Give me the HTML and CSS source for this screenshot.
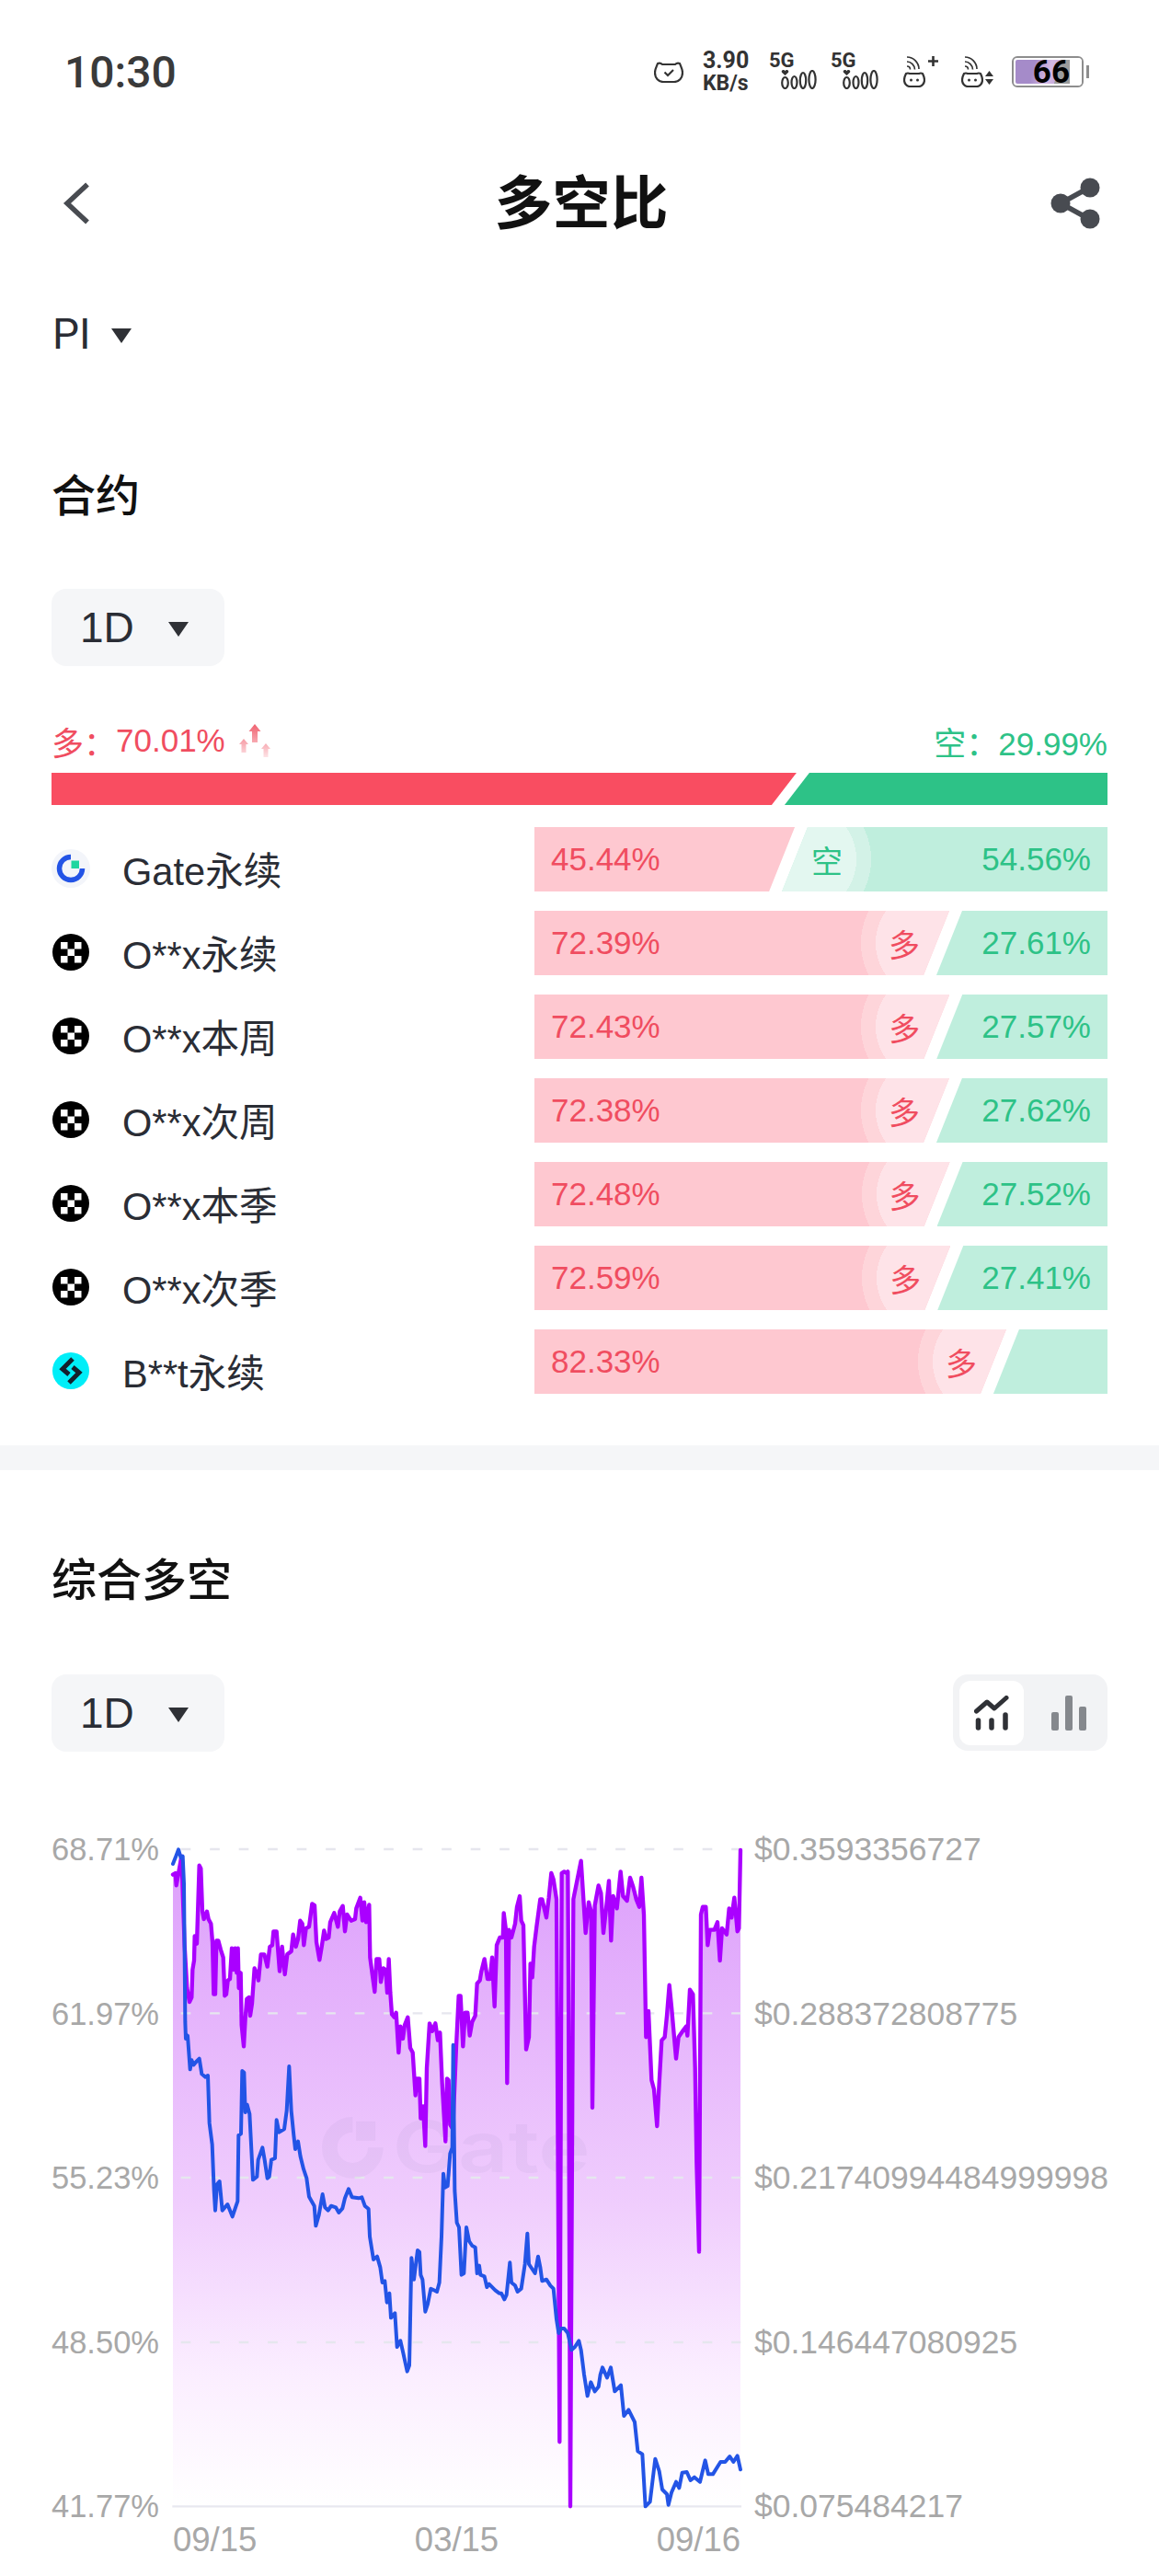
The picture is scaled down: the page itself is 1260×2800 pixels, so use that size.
FILE: index.html
```html
<!DOCTYPE html>
<html lang="zh-CN">
<head>
<meta charset="UTF-8">
<meta name="viewport" content="width=device-width, initial-scale=1.0">
<title>多空比</title>
<link rel="stylesheet" href="styles.css">
</head>
<body>

<svg class="sprite" xmlns="http://www.w3.org/2000/svg">
  <symbol id="okx" viewBox="0 0 42 42">
    <circle cx="21" cy="21" r="20" fill="#000"/>
    <path fill="#fff" d="M10 10h7.500v7.500H10zM25 10h7.500v7.500H25zM17.500 17.500H25V25h-7.500zM10 25h7.500v7.500H10zM25 25h7.500v7.500H25z"/>
  </symbol>
  <symbol id="signal" viewBox="0 0 39 21">
    <path fill="#333" d="M4.500 6 1 2.800C.2 1.500 1 0 2.500 0c1 0 1.600.5 2 1.200C4.900.5 5.500 0 6.500 0 8 0 8.800 1.500 8 2.800z"/>
    <g fill="none" stroke="#333" stroke-width="2.200">
      <ellipse cx="4.500" cy="14" rx="3.300" ry="6"/>
      <ellipse cx="14.500" cy="13.500" rx="3" ry="6.500"/>
      <ellipse cx="24" cy="11.500" rx="3.200" ry="8.500"/>
      <ellipse cx="34" cy="10.500" rx="3.600" ry="9.500"/>
    </g>
  </symbol>
  <symbol id="catwifi" viewBox="0 0 24 34">
    <g fill="none" stroke="#333" stroke-width="1.700">
      <path d="M4 1c7 0 13 6 13 13"/>
      <path d="M4 6c4.500 0 8.500 4 8.500 8.500"/>
      <path d="M4 11c2 0 3.500 1.500 3.500 3.500"/>
      <path stroke-width="2.200" d="M3 19c2-1 3-.5 4 0h10c1-.5 2-1 4 0 1 2 2 4 2 7 0 4-3 7-6 7H7c-3 0-6-3-6-7 0-3 1-5 2-7z"/>
    </g>
    <circle cx="8.500" cy="26" r="1.500" fill="#333"/>
    <circle cx="15.500" cy="26" r="1.500" fill="#333"/>
  </symbol>
  <symbol id="caret" viewBox="0 0 22 16">
    <path fill="#2f3136" d="M0 0h22L11 16z"/>
  </symbol>
</svg>

<div class="status">
  <span class="clock">10:30</span>
  <div class="status-icons">
    <svg class="ic-alarm" viewBox="0 0 32 24" width="32" height="24">
      <path fill="none" stroke="#333" stroke-width="2.200" d="M4 3c3-1 4 0 5 1h14c1-1 2-2 5-1 1 3 3 6 3 10 0 6-4 10-9 10H10C5 23 1 19 1 13c0-4 2-7 3-10z"/>
      <path fill="none" stroke="#333" stroke-width="2.200" d="M11.500 12.500l3.500 3.500 6-6"/>
    </svg>
    <div class="speed"><span>3.90</span><span class="speed-unit">KB/s</span></div>
    <div class="net"><span>5G</span><svg class="ic-signal"><use href="#signal"/></svg></div>
    <div class="net"><span>5G</span><svg class="ic-signal"><use href="#signal"/></svg></div>
    <div class="wifi wifi-a">
      <svg class="ic-cat"><use href="#catwifi"/></svg>
      <svg class="ic-plus" viewBox="0 0 11 11" width="11" height="11"><path stroke="#333" stroke-width="2.600" d="M5.500 0v11M0 5.500h11"/></svg>
    </div>
    <div class="wifi wifi-b">
      <svg class="ic-cat"><use href="#catwifi"/></svg>
      <svg class="ic-updown" viewBox="0 0 9 15" width="9" height="15"><path fill="#333" d="M4.500 0 9 6H0zM0 9h9l-4.500 6z"/></svg>
    </div>
    <div class="battery"><div class="battery-cell"><span>66</span></div><i class="battery-nub"></i></div>
  </div>
</div>

<header class="nav">
  <svg class="back" viewBox="0 0 30 46" width="30" height="46"><path fill="none" stroke="#484b51" stroke-width="5.500" d="M27 2.500 5 23l22 20.500"/></svg>
  <h1>多空比</h1>
  <svg class="share" viewBox="0 0 54 56" width="54" height="56">
    <path fill="none" stroke="#484b51" stroke-width="5.500" d="M42 11 11 28l31 17"/>
    <circle cx="43" cy="11" r="10.500" fill="#484b51"/>
    <circle cx="11" cy="28" r="10.500" fill="#484b51"/>
    <circle cx="43" cy="45" r="10.500" fill="#484b51"/>
  </svg>
</header>

<div class="coin"><span>PI</span><svg class="caret-sm"><use href="#caret"/></svg></div>

<section class="contract">
  <h2>合约</h2>
  <div class="select"><span>1D</span><svg class="caret"><use href="#caret"/></svg></div>

  <div class="legend">
    <div class="legend-long">
      <span class="cjk">多：</span><span>70.01%</span>
      <svg class="sparkle" viewBox="0 0 36 36" width="36" height="36">
        <defs><linearGradient id="spark" x1="0" y1="0" x2="0" y2="1"><stop offset="0" stop-color="#f0616f"/><stop offset="1" stop-color="#fde3e6"/></linearGradient></defs>
        <path fill="url(#spark)" d="M18 0l6.500 8H21v12h-6V8h-3.500zM6 16l5 6H8.500v9h-5v-9H1zM30 21l5 6h-2.500v9h-5v-9H25z"/>
      </svg>
    </div>
    <div class="legend-short"><span class="cjk">空：</span><span>29.99%</span></div>
  </div>
  <div class="total-bar">
    <div class="total-long" style="width: 70.55%"></div>
    <div class="total-short"></div>
  </div>

  <ul class="rows">
    <li class="row">
      <div class="name">
        <svg class="logo" viewBox="0 0 42 42">
          <circle cx="21" cy="21" r="21" fill="#f3f5fa"/>
          <path fill="none" stroke="#2354e6" stroke-width="5.500" d="M21 8.500A12.500 12.500 0 1 0 33.500 21"/>
          <path fill="#1fd6a0" d="M21.500 12.500h8.500V21h-8.500z"/>
        </svg>
        <span>Gate永续</span>
      </div>
      <div class="split">
        <div class="long" style="width: 45.44%"><span>45.44%</span></div>
        <div class="short lead"><em>空</em><span>54.56%</span></div>
      </div>
    </li>
    <li class="row">
      <div class="name"><svg class="logo"><use href="#okx"/></svg><span>O**x永续</span></div>
      <div class="split">
        <div class="long lead" style="width: 72.39%"><span>72.39%</span><em>多</em></div>
        <div class="short"><span>27.61%</span></div>
      </div>
    </li>
    <li class="row">
      <div class="name"><svg class="logo"><use href="#okx"/></svg><span>O**x本周</span></div>
      <div class="split">
        <div class="long lead" style="width: 72.43%"><span>72.43%</span><em>多</em></div>
        <div class="short"><span>27.57%</span></div>
      </div>
    </li>
    <li class="row">
      <div class="name"><svg class="logo"><use href="#okx"/></svg><span>O**x次周</span></div>
      <div class="split">
        <div class="long lead" style="width: 72.38%"><span>72.38%</span><em>多</em></div>
        <div class="short"><span>27.62%</span></div>
      </div>
    </li>
    <li class="row">
      <div class="name"><svg class="logo"><use href="#okx"/></svg><span>O**x本季</span></div>
      <div class="split">
        <div class="long lead" style="width: 72.48%"><span>72.48%</span><em>多</em></div>
        <div class="short"><span>27.52%</span></div>
      </div>
    </li>
    <li class="row">
      <div class="name"><svg class="logo"><use href="#okx"/></svg><span>O**x次季</span></div>
      <div class="split">
        <div class="long lead" style="width: 72.59%"><span>72.59%</span><em>多</em></div>
        <div class="short"><span>27.41%</span></div>
      </div>
    </li>
    <li class="row">
      <div class="name">
        <svg class="logo" viewBox="0 0 42 42">
          <circle cx="21" cy="21" r="20" fill="#00eef8"/>
          <path fill="none" stroke="#14202c" stroke-width="5" d="M23 8 12 19l7 6M19 34l11-11-7-6"/>
        </svg>
        <span>B**t永续</span>
      </div>
      <div class="split">
        <div class="long lead" style="width: 82.33%"><span>82.33%</span><em>多</em></div>
        <div class="short"></div>
      </div>
    </li>
  </ul>
</section>

<div class="divider"></div>

<section class="overall">
  <h2>综合多空</h2>
  <div class="toolbar">
    <div class="select"><span>1D</span><svg class="caret"><use href="#caret"/></svg></div>
    <div class="toggle">
      <div class="toggle-item active">
        <svg viewBox="0 0 38 38" width="38" height="38">
          <path fill="none" stroke="#2f3136" stroke-width="5" stroke-linecap="round" stroke-linejoin="round" d="M2.500 17 14 7l8 7L35 2.500"/>
          <path stroke="#2f3136" stroke-width="5.500" stroke-linecap="round" d="M4.500 27v8M19 27v8M34 21v14"/>
        </svg>
      </div>
      <div class="toggle-item">
        <svg viewBox="0 0 38 38" width="38" height="38">
          <path fill="#85888d" d="M0 20a2 2 0 0 1 2-2h4a2 2 0 0 1 2 2v16a2 2 0 0 1-2 2H2a2 2 0 0 1-2-2zM15 2a2 2 0 0 1 2-2h4a2 2 0 0 1 2 2v34a2 2 0 0 1-2 2h-4a2 2 0 0 1-2-2zM30 14a2 2 0 0 1 2-2h4a2 2 0 0 1 2 2v22a2 2 0 0 1-2 2h-4a2 2 0 0 1-2-2z"/>
        </svg>
      </div>
    </div>
  </div>

  <div class="chart">
    <div class="axis axis-left">
      <span>68.71%</span><span>61.97%</span><span>55.23%</span><span>48.50%</span><span>41.77%</span>
    </div>
    <svg class="plot" viewBox="72 0 1872 2295" width="624" height="765">
      <defs>
        <linearGradient id="area" gradientUnits="userSpaceOnUse" x1="0" y1="87" x2="0" y2="2230">
          <stop offset="0" stop-color="#dc9efb"/>
          <stop offset="0.55" stop-color="#f0cefd"/>
          <stop offset="0.8" stop-color="#fbeeff"/>
          <stop offset="1" stop-color="#ffffff"/>
        </linearGradient>
      </defs>
      <path fill="url(#area)" d="M84 170L92 165L95 205L105 150L112 110L122 400L130 540L138 585L145 570L148 480L153 450L155 370L162 395L165 300L170 140L175 150L180 290L185 315L195 290L200 315L208 330L213 390L217 560L222 560L226 385L232 385L240 415L248 440L253 565L258 560L263 515L270 510L276 410L282 480L287 410L292 490L296 410L299 540L305 490L308 660L315 730L320 640L325 575L332 570L336 630L342 590L350 475L357 490L363 515L371 430L382 430L392 470L400 405L408 400L412 355L422 355L432 485L440 405L449 495L457 430L470 420L476 365L485 405L492 380L499 320L506 330L511 400L518 345L528 340L538 265L546 270L552 390L562 448L570 400L577 352L583 380L592 375L597 325L610 295L622 340L628 290L638 272L645 355L652 300L665 320L678 315L682 280L695 245L702 320L708 260L714 325L724 268L727 440L735 500L742 552L748 445L757 445L762 520L770 475L778 480L783 555L788 445L793 555L798 625L806 635L812 620L820 750L826 665L834 705L840 660L850 635L858 735L866 750L875 890L880 835L888 835L892 965L900 925L907 1055L912 800L921 655L930 680L940 655L948 710L955 685L962 850L973 1040L978 835L983 840L988 985L997 1000L1008 730L1016 565L1022 565L1030 730L1037 620L1045 620L1052 695L1060 650L1070 630L1076 525L1085 515L1090 485L1100 445L1110 510L1118 510L1125 440L1133 600L1140 400L1150 375L1160 375L1163 295L1170 350L1174 850L1180 350L1188 375L1200 330L1206 275L1215 240L1220 320L1227 335L1236 740L1245 700L1250 460L1256 505L1262 405L1270 340L1282 250L1288 250L1302 310L1310 245L1318 165L1325 185L1335 250L1345 2020L1352 165L1360 160L1368 165L1372 160L1374 500L1380 2230L1390 250L1415 125L1430 360L1440 260L1448 290L1452 930L1460 270L1472 205L1480 230L1488 360L1497 280L1506 190L1513 385L1520 240L1532 280L1544 160L1552 240L1565 255L1575 180L1585 210L1595 250L1605 275L1612 180L1620 300L1627 700L1635 615L1645 840L1653 870L1663 990L1670 850L1678 710L1688 700L1695 630L1703 530L1710 600L1725 770L1733 700L1750 675L1758 665L1762 695L1770 545L1780 560L1787 800L1792 1110L1800 1400L1806 300L1812 275L1822 275L1828 400L1835 350L1850 350L1860 325L1868 450L1875 345L1890 365L1898 280L1906 310L1915 245L1925 355L1930 345L1935 90L1935 2230L84 2230Z"/>
      <g class="grid">
        <line x1="110" x2="1936" y1="87" y2="87"/>
        <line x1="110" x2="1936" y1="622" y2="622"/>
        <line x1="110" x2="1936" y1="1158" y2="1158"/>
        <line x1="110" x2="1936" y1="1695" y2="1695"/>
      </g>
      <line class="baseline" x1="82" x2="1938" y1="2230" y2="2230"/>
      <g class="watermark">
        <path fill="none" stroke-width="50" d="M670 985A75 75 0 1 0 745 1060"/>
        <path d="M682 975h62v62h-62z"/>
        <text x="800" y="1140" textLength="645" lengthAdjust="spacingAndGlyphs">Gate</text>
      </g>
      <path class="line-ratio" d="M84 170L92 165L95 205L105 150L112 110L122 400L130 540L138 585L145 570L148 480L153 450L155 370L162 395L165 300L170 140L175 150L180 290L185 315L195 290L200 315L208 330L213 390L217 560L222 560L226 385L232 385L240 415L248 440L253 565L258 560L263 515L270 510L276 410L282 480L287 410L292 490L296 410L299 540L305 490L308 660L315 730L320 640L325 575L332 570L336 630L342 590L350 475L357 490L363 515L371 430L382 430L392 470L400 405L408 400L412 355L422 355L432 485L440 405L449 495L457 430L470 420L476 365L485 405L492 380L499 320L506 330L511 400L518 345L528 340L538 265L546 270L552 390L562 448L570 400L577 352L583 380L592 375L597 325L610 295L622 340L628 290L638 272L645 355L652 300L665 320L678 315L682 280L695 245L702 320L708 260L714 325L724 268L727 440L735 500L742 552L748 445L757 445L762 520L770 475L778 480L783 555L788 445L793 555L798 625L806 635L812 620L820 750L826 665L834 705L840 660L850 635L858 735L866 750L875 890L880 835L888 835L892 965L900 925L907 1055L912 800L921 655L930 680L940 655L948 710L955 685L962 850L973 1040L978 835L983 840L988 985L997 1000L1008 730L1016 565L1022 565L1030 730L1037 620L1045 620L1052 695L1060 650L1070 630L1076 525L1085 515L1090 485L1100 445L1110 510L1118 510L1125 440L1133 600L1140 400L1150 375L1160 375L1163 295L1170 350L1174 850L1180 350L1188 375L1200 330L1206 275L1215 240L1220 320L1227 335L1236 740L1245 700L1250 460L1256 505L1262 405L1270 340L1282 250L1288 250L1302 310L1310 245L1318 165L1325 185L1335 250L1345 2020L1352 165L1360 160L1368 165L1372 160L1374 500L1380 2230L1390 250L1415 125L1430 360L1440 260L1448 290L1452 930L1460 270L1472 205L1480 230L1488 360L1497 280L1506 190L1513 385L1520 240L1532 280L1544 160L1552 240L1565 255L1575 180L1585 210L1595 250L1605 275L1612 180L1620 300L1627 700L1635 615L1645 840L1653 870L1663 990L1670 850L1678 710L1688 700L1695 630L1703 530L1710 600L1725 770L1733 700L1750 675L1758 665L1762 695L1770 545L1780 560L1787 800L1792 1110L1800 1400L1806 300L1812 275L1822 275L1828 400L1835 350L1850 350L1860 325L1868 450L1875 345L1890 365L1898 280L1906 310L1915 245L1925 355L1930 345L1935 90"/>
      <path class="line-price" d="M84 135L92 115L102 88L110 115L116 110L120 200L124 650L126 705L132 695L140 805L145 775L152 790L160 780L170 770L178 820L190 830L198 825L203 980L212 1050L218 1200L222 1265L228 1180L236 1170L245 1265L262 1245L278 1285L295 1235L298 1020L306 1015L310 810L316 815L320 945L326 920L334 950L345 1165L358 1155L362 1100L376 1060L383 1100L392 1160L398 1155L405 1100L417 1095L422 970L430 1010L438 1005L447 1000L455 940L463 795L470 940L478 1020L483 1065L492 1040L500 1090L510 1130L520 1160L528 1220L545 1250L550 1315L560 1280L572 1212L580 1255L590 1265L600 1250L615 1255L625 1272L637 1258L645 1225L657 1195L668 1222L690 1225L700 1222L710 1250L722 1260L726 1350L738 1425L750 1415L760 1450L767 1500L775 1495L782 1565L790 1535L795 1615L808 1600L815 1710L826 1690L835 1730L848 1790L855 1770L862 1420L870 1490L882 1395L888 1400L892 1475L898 1490L907 1595L915 1570L925 1520L935 1525L945 1530L953 1500L960 1350L966 1145L972 1190L980 1185L988 1080L995 1060L998 725L1003 1200L1010 1305L1017 1320L1025 1475L1033 1470L1041 1320L1050 1365L1060 1380L1070 1385L1076 1470L1083 1445L1087 1475L1100 1480L1108 1515L1115 1505L1135 1525L1148 1535L1155 1535L1165 1555L1172 1540L1183 1435L1188 1500L1200 1510L1208 1530L1220 1520L1232 1440L1240 1340L1245 1440L1255 1455L1265 1470L1275 1415L1282 1450L1288 1495L1302 1490L1315 1510L1325 1520L1335 1620L1342 1665L1350 1650L1360 1650L1372 1665L1384 1720L1395 1710L1408 1690L1415 1720L1425 1800L1436 1870L1447 1825L1460 1855L1472 1840L1478 1800L1485 1777L1500 1810L1512 1777L1525 1855L1545 1835L1555 1935L1570 1915L1590 1955L1600 2050L1615 2060L1625 2230L1640 2215L1657 2075L1670 2115L1680 2175L1695 2190L1700 2225L1710 2185L1725 2150L1735 2170L1745 2120L1760 2118L1772 2145L1785 2135L1803 2150L1820 2080L1830 2125L1845 2125L1870 2085L1885 2085L1900 2067L1912 2085L1925 2065L1935 2110"/>
    </svg>
    <div class="axis axis-right">
      <span>$0.3593356727</span><span>$0.288372808775</span><span>$0.21740994484999998</span><span>$0.146447080925</span><span>$0.075484217</span>
    </div>
  </div>
  <div class="dates"><span>09/15</span><span>03/15</span><span>09/16</span></div>
</section>

</body>
</html>
```

FILE: styles.css
```css
* {
  box-sizing: border-box;
}

body {
  margin: 0;
  width: 1260px;
  height: 2800px;
  overflow: hidden;
  background-color: #fff;
  color: #2a2d35;
  font-family: "Liberation Sans", "Noto Sans CJK SC", sans-serif;
}

.sprite {
  display: none;
}

h1, h2, ul {
  margin: 0;
  padding: 0;
}

/* status bar */
.status {
  height: 156px;
  padding: 0 76px 0 70px;
  display: flex;
  align-items: center;
  justify-content: space-between;
}

.clock {
  font-family: Roboto, sans-serif;
  font-size: 48px;
  font-weight: 500;
  color: #3a3a3a;
}

.status-icons {
  display: flex;
  align-items: center;
  color: #333;
  font-family: Roboto, sans-serif;
}

.ic-alarm {
  margin-right: 21px;
}

.speed {
  width: 72px;
  display: flex;
  flex-direction: column;
  font-size: 25px;
  font-weight: 700;
  line-height: 25px;
}

.speed-unit {
  font-size: 23px;
}

.net {
  width: 67px;
  height: 42px;
  font-size: 22px;
  font-weight: 700;
  line-height: 20px;
  margin-top: -2px;
}

.net span {
  display: block;
}

.ic-signal {
  display: block;
  width: 39px;
  height: 21px;
  margin-left: 13px;
}

.wifi {
  display: flex;
  align-items: flex-start;
}

.ic-cat {
  width: 24px;
  height: 34px;
}

.wifi-a {
  width: 63px;
  margin-left: 12px;
}

.ic-plus {
  margin-left: 3px;
}

.wifi-b {
  width: 55px;
}

.ic-updown {
  margin: 16px 0 0 2px;
}

.battery {
  display: flex;
  align-items: center;
}

.battery-cell {
  width: 78px;
  height: 34px;
  padding: 0 13px 0 0;
  display: flex;
  align-items: center;
  justify-content: flex-end;
  border: 2px solid #8d8d8d;
  border-radius: 6px;
  background: linear-gradient(105deg, #a58bc9 0, #a58bc9 35%, #d5b8e3 62%, #c9aedd 74%, #9c9c9c 75%) content-box;
  font-size: 35px;
  font-weight: 700;
  color: #000;
  outline: 2px solid #fff;
  outline-offset: -4px;
}

.battery-nub {
  width: 3px;
  height: 14px;
  margin-left: 3px;
  background-color: #8d8d8d;
}

/* title */
.nav {
  height: 130px;
  padding: 0 64px 0 68px;
  display: grid;
  grid-template-columns: 1fr auto 1fr;
  align-items: center;
}

.nav h1 {
  font-size: 63px;
  font-weight: 700;
  color: #111;
  line-height: 70px;
}

.share {
  justify-self: end;
}

.coin {
  height: 154px;
  padding-left: 57px;
  display: flex;
  align-items: center;
  font-family: Roboto, sans-serif;
  font-size: 46px;
  color: #2a2d35;
}

.caret-sm {
  width: 22px;
  height: 16px;
  margin: 4px 0 0 22px;
}

/* sections */
section {
  padding: 0 56px;
}

h2 {
  font-size: 48px;
  font-weight: 500;
  line-height: 60px;
  color: #111;
}

.overall h2 {
  font-size: 49px;
}

.contract h2 {
  margin-top: 70px;
}

.select {
  width: 188px;
  height: 84px;
  padding-left: 31px;
  display: flex;
  align-items: center;
  border-radius: 16px;
  background-color: #f5f6f8;
  font-size: 46px;
}

.contract .select {
  margin-top: 70px;
}

.caret {
  width: 22px;
  height: 16px;
  margin: 4px 0 0 37px;
}

.legend {
  margin-top: 59px;
  height: 44px;
  display: flex;
  justify-content: space-between;
  align-items: center;
  font-size: 35px;
}

.legend-long {
  display: flex;
  align-items: center;
  color: #f04d60;
}

.sparkle {
  margin-left: 14px;
}

.legend-short {
  color: #2dc287;
}

.total-bar {
  margin-top: 13px;
  height: 35px;
  display: flex;
}

.total-long {
  background-color: #f94d61;
  clip-path: polygon(0 0, 100% 0, calc(100% - 27px) 100%, 0 100%);
}

.total-short {
  flex: 1;
  margin-left: -13px;
  background-color: #2dc287;
  clip-path: polygon(27px 0, 100% 0, 100% 100%, 0 100%);
}

.rows {
  margin-top: 24px;
  list-style: none;
  display: flex;
  flex-direction: column;
  gap: 21px;
}

.row {
  height: 70px;
  display: flex;
}

.name {
  width: 525px;
  padding-top: 20px;
  display: flex;
  align-items: center;
  font-size: 41.6px;
}

.logo {
  width: 42px;
  height: 42px;
  margin-right: 35px;
}

.split {
  flex: 1;
  display: flex;
  font-size: 35px;
}

.long,
.short {
  height: 70px;
  display: flex;
  align-items: center;
  justify-content: space-between;
}

.long {
  padding: 0 32px 0 18px;
  background-color: #fec8d0;
  color: #f04d60;
  clip-path: polygon(0 0, 100% 0, calc(100% - 28px) 100%, 0 100%);
}

.long.lead {
  background-image: radial-gradient(circle at calc(100% - 20px) 50%, #fee3e8 60px, #fed5da 60px, #fed5da 76px, transparent 76px);
}

.short {
  flex: 1;
  margin-left: -14px;
  padding: 0 18px 0 32px;
  background-color: #bfeedd;
  color: #2dc287;
  justify-content: flex-end;
  clip-path: polygon(28px 0, 100% 0, 100% 100%, 0 100%);
}

.short.lead {
  background-image: radial-gradient(circle at 21px 50%, #e3f7f0 60px, #d3f2e7 60px, #d3f2e7 76px, transparent 76px);
  justify-content: space-between;
}

.split em {
  font-style: normal;
  font-size: 34px;
}

.divider {
  margin-top: 56px;
  height: 27px;
  background-color: #f5f6f8;
}

.overall h2 {
  margin-top: 90px;
}

.toolbar {
  margin-top: 72px;
  display: flex;
  justify-content: space-between;
}

.toggle {
  width: 168px;
  height: 83px;
  padding: 7px;
  display: flex;
  justify-content: space-between;
  border-radius: 16px;
  background-color: #f2f3f5;
}

.toggle-item {
  width: 70px;
  height: 70px;
  display: flex;
  align-items: center;
  justify-content: center;
  border-radius: 12px;
}

.toggle-item.active {
  background-color: #fff;
}

/* chart */
.chart {
  margin-top: 77px;
  display: flex;
}

.axis {
  flex: none;
  height: 765px;
  padding-top: 7px;
  display: flex;
  flex-direction: column;
  justify-content: space-between;
  font-size: 35.5px;
  line-height: 44px;
  color: #a8a8a8;
}

.axis-left {
  width: 128px;
  font-size: 34.5px;
}

.axis-right {
  padding-left: 12px;
  white-space: nowrap;
}

.plot {
  flex: none;
}

.grid line {
  stroke: #e6e6ee;
  stroke-width: 7;
  stroke-dasharray: 32 62.5;
}

.baseline {
  stroke: #e8e8f0;
  stroke-width: 7;
}

.watermark {
  stroke: rgba(60, 40, 90, 0.04);
  fill: rgba(60, 40, 90, 0.04);
}

.watermark text {
  stroke: none;
  font-family: Inter, sans-serif;
  font-size: 230px;
  font-weight: 600;
}

.line-ratio,
.line-price {
  fill: none;
  stroke-linejoin: round;
  stroke-linecap: round;
}

.line-ratio {
  stroke: #aa00ff;
  stroke-width: 13;
}

.line-price {
  stroke: #2354e6;
  stroke-width: 12;
}

.dates {
  width: 617px;
  margin-left: 132px;
  display: flex;
  justify-content: space-between;
  font-size: 36.5px;
  line-height: 30px;
  color: #a8a8a8;
}
```
